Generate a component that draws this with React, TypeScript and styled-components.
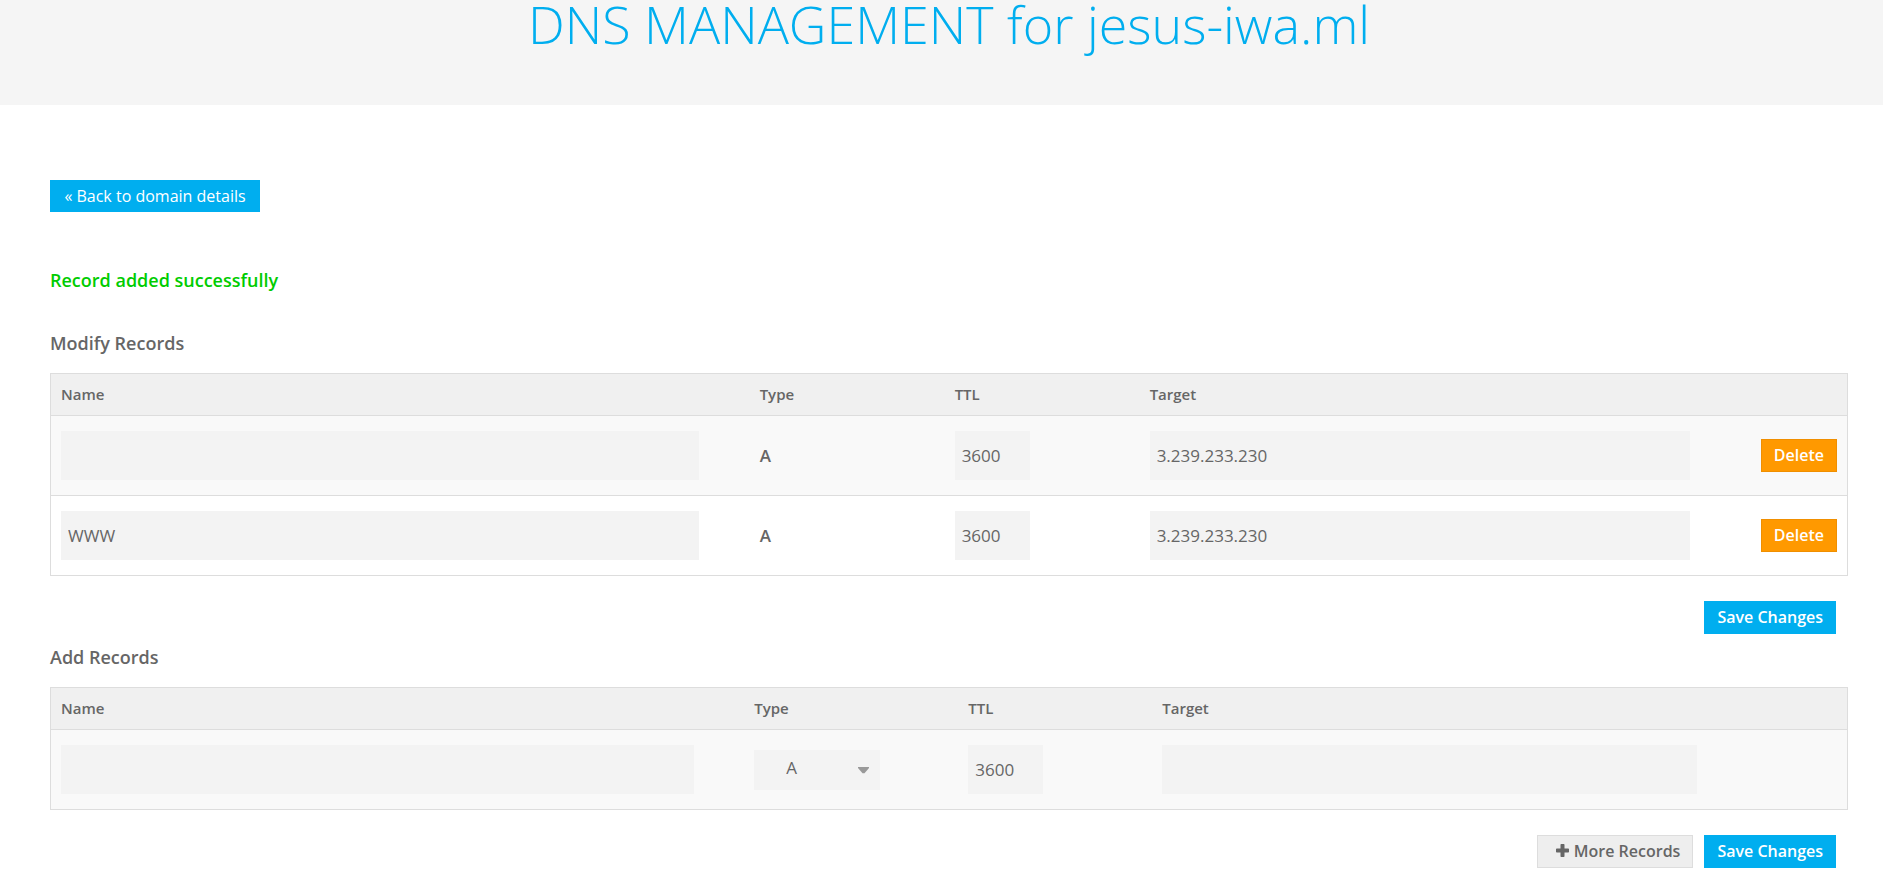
import React from "react";
import styled, { createGlobalStyle, css } from "styled-components";

const GlobalStyle = createGlobalStyle`
  *, *::before, *::after { box-sizing: border-box; }
  body {
    margin: 0;
    background: #fff;
    color: #666;
    font-family: "Open Sans", "Noto Sans", sans-serif;
    font-size: 16px;
    line-height: 24px;
  }
`;

const Banner = styled.header`
  height: 105px;
  padding: 0 35px 0 50px;
  background: #f5f5f5;
`;

const Title = styled.h1`
  margin: 0;
  color: #00aeef;
  font-size: 52px;
  font-weight: 300;
  line-height: 48px;
  text-align: center;
`;

const Content = styled.main`
  padding: 75px 35px 20px 50px;
`;

const BackLink = styled.a`
  display: inline-block;
  min-width: 210px;
  padding: 4px 13px;
  background: #00aeef;
  color: #fff;
  text-align: center;
  text-decoration: none;
`;

const Message = styled.p`
  margin: 56px 0 39px;
  color: #0c0;
  font-size: 18px;
  font-weight: 600;
`;

const SectionTitle = styled.h2`
  margin: 0 0 18px;
  font-size: 18px;
  font-weight: 600;
  line-height: 24px;
`;

const Table = styled.table`
  width: 100%;
  table-layout: fixed;
  border: 1px solid #ddd;
  border-spacing: 0;

  th,
  td {
    padding: 0 10px;
    text-align: left;
    vertical-align: middle;
  }
  th {
    height: 41px;
    padding-bottom: 2px;
    background: #f0f0f0;
    font-size: 15px;
    font-weight: 600;
  }
  td {
    height: 80px;
    border-top: 1px solid #ddd;
  }
  tbody tr:nth-child(odd) td {
    background: #f9f9f9;
  }
`;

const Col = styled.col<{ $width?: string }>`
  width: ${(p) => p.$width ?? "auto"};
`;

const Field = styled.input<{ $short?: boolean }>`
  display: block;
  width: ${(p) => (p.$short ? "75px" : "94%")};
  height: 49px;
  padding: 0 7px;
  border: 0;
  border-radius: 0;
  background: #f3f3f3;
  color: #666;
  font-family: inherit;
  font-size: 17px;
`;

const TypeName = styled.strong`
  font-size: 17px;
  font-weight: 600;
`;

const SelectBox = styled.div`
  position: relative;
  width: 126px;

  svg {
    position: absolute;
    top: 17px;
    right: 11px;
    pointer-events: none;
  }
`;

const TypeSelect = styled.select`
  display: block;
  width: 100%;
  height: 40px;
  padding: 0 32px 4px;
  border: 0;
  border-radius: 0;
  appearance: none;
  background: #f3f3f3;
  color: #666;
  font-family: inherit;
  font-size: 17px;
`;

const tones = {
  primary: css`
    background: #00aeef;
    border-color: #00aeef;
    color: #fff;
  `,
  danger: css`
    background: #f90;
    border-color: #f08f00;
    color: #fff;
  `,
  plain: css`
    background: #eee;
    border-color: #ddd;
    color: #666;
  `,
};

const Button = styled.button<{ $tone: keyof typeof tones }>`
  display: inline-flex;
  align-items: center;
  gap: 5px;
  height: 33px;
  padding: 0 12px 2px;
  border: 1px solid;
  border-radius: 0;
  font-family: inherit;
  font-size: 16px;
  font-weight: 600;
  line-height: 24px;
  cursor: pointer;
  ${(p) => tones[p.$tone]}

  svg {
    margin-left: 6px;
  }
`;

const ActionCell = styled.td`
  && {
    text-align: right;
  }
`;

const Actions = styled.div`
  display: flex;
  justify-content: flex-end;
  gap: 11px;
  padding: 25px 12px 11px 0;
`;

type RecordRow = { name: string; type: string; ttl: string; target: string };

const records: RecordRow[] = [
  { name: "", type: "A", ttl: "3600", target: "3.239.233.230" },
  { name: "WWW", type: "A", ttl: "3600", target: "3.239.233.230" },
];

const recordTypes = ["A", "AAAA", "CNAME", "LOC", "MX", "NAPTR", "RP", "TXT"];

function Columns({ widths }: { widths: string[] }) {
  return (
    <colgroup>
      {widths.map((w, i) => (
        <Col key={i} $width={w} />
      ))}
      <Col />
    </colgroup>
  );
}

function Head() {
  return (
    <thead>
      <tr>
        <th scope="col">Name</th>
        <th scope="col">Type</th>
        <th scope="col">TTL</th>
        <th scope="col">Target</th>
        <th />
      </tr>
    </thead>
  );
}

function PlusIcon() {
  return (
    <svg width="13" height="13" viewBox="0 0 13 13" aria-hidden="true">
      <path
        fill="#666"
        d="M5.3 0h2.4q.8 0 .8.8v3.7h3.7q.8 0 .8.8v2.4q0 .8-.8.8H8.500v3.700q0 .8-.8.8H5.300q-.8 0-.8-.8V8.500H.8q-.8 0-.8-.8V5.300q0-.8.8-.8h3.700V.8q0-.8.8-.8z"
      />
    </svg>
  );
}

export default function App() {
  return (
    <>
      <GlobalStyle />
      <Banner>
        <Title>DNS MANAGEMENT for jesus-iwa.ml</Title>
      </Banner>
      <Content>
        <BackLink href="#domain">« Back to domain details</BackLink>
        <Message role="status">Record added successfully</Message>

        <form onSubmit={(e) => e.preventDefault()}>
          <SectionTitle>Modify Records</SectionTitle>
          <Table>
            <Columns widths={["38.9%", "195px", "195px", "33.1%"]} />
            <Head />
            <tbody>
              {records.map((r, i) => (
                <tr key={i}>
                  <td>
                    <Field aria-label="Name" defaultValue={r.name} />
                  </td>
                  <td>
                    <TypeName>{r.type}</TypeName>
                  </td>
                  <td>
                    <Field aria-label="TTL" $short defaultValue={r.ttl} />
                  </td>
                  <td>
                    <Field aria-label="Target" defaultValue={r.target} />
                  </td>
                  <ActionCell>
                    <Button type="button" $tone="danger">
                      Delete
                    </Button>
                  </ActionCell>
                </tr>
              ))}
            </tbody>
          </Table>
          <Actions>
            <Button type="submit" $tone="primary">
              Save Changes
            </Button>
          </Actions>
        </form>

        <form onSubmit={(e) => e.preventDefault()}>
          <SectionTitle>Add Records</SectionTitle>
          <Table>
            <Columns widths={["38.6%", "214px", "194px", "32.8%"]} />
            <Head />
            <tbody>
              <tr>
                <td>
                  <Field aria-label="Name" />
                </td>
                <td>
                  <SelectBox>
                    <TypeSelect aria-label="Type" defaultValue="A">
                      {recordTypes.map((t) => (
                        <option key={t}>{t}</option>
                      ))}
                    </TypeSelect>
                    <svg width="11" height="7" viewBox="0 0 11 7" aria-hidden="true">
                      <path d="M0 0h11v1L6.500 6.300h-2L0 1z" fill="#999" />
                    </svg>
                  </SelectBox>
                </td>
                <td>
                  <Field aria-label="TTL" $short defaultValue="3600" />
                </td>
                <td>
                  <Field aria-label="Target" />
                </td>
                <td />
              </tr>
            </tbody>
          </Table>
          <Actions>
            <Button type="button" $tone="plain">
              <PlusIcon />
              More Records
            </Button>
            <Button type="submit" $tone="primary">
              Save Changes
            </Button>
          </Actions>
        </form>
      </Content>
    </>
  );
}
